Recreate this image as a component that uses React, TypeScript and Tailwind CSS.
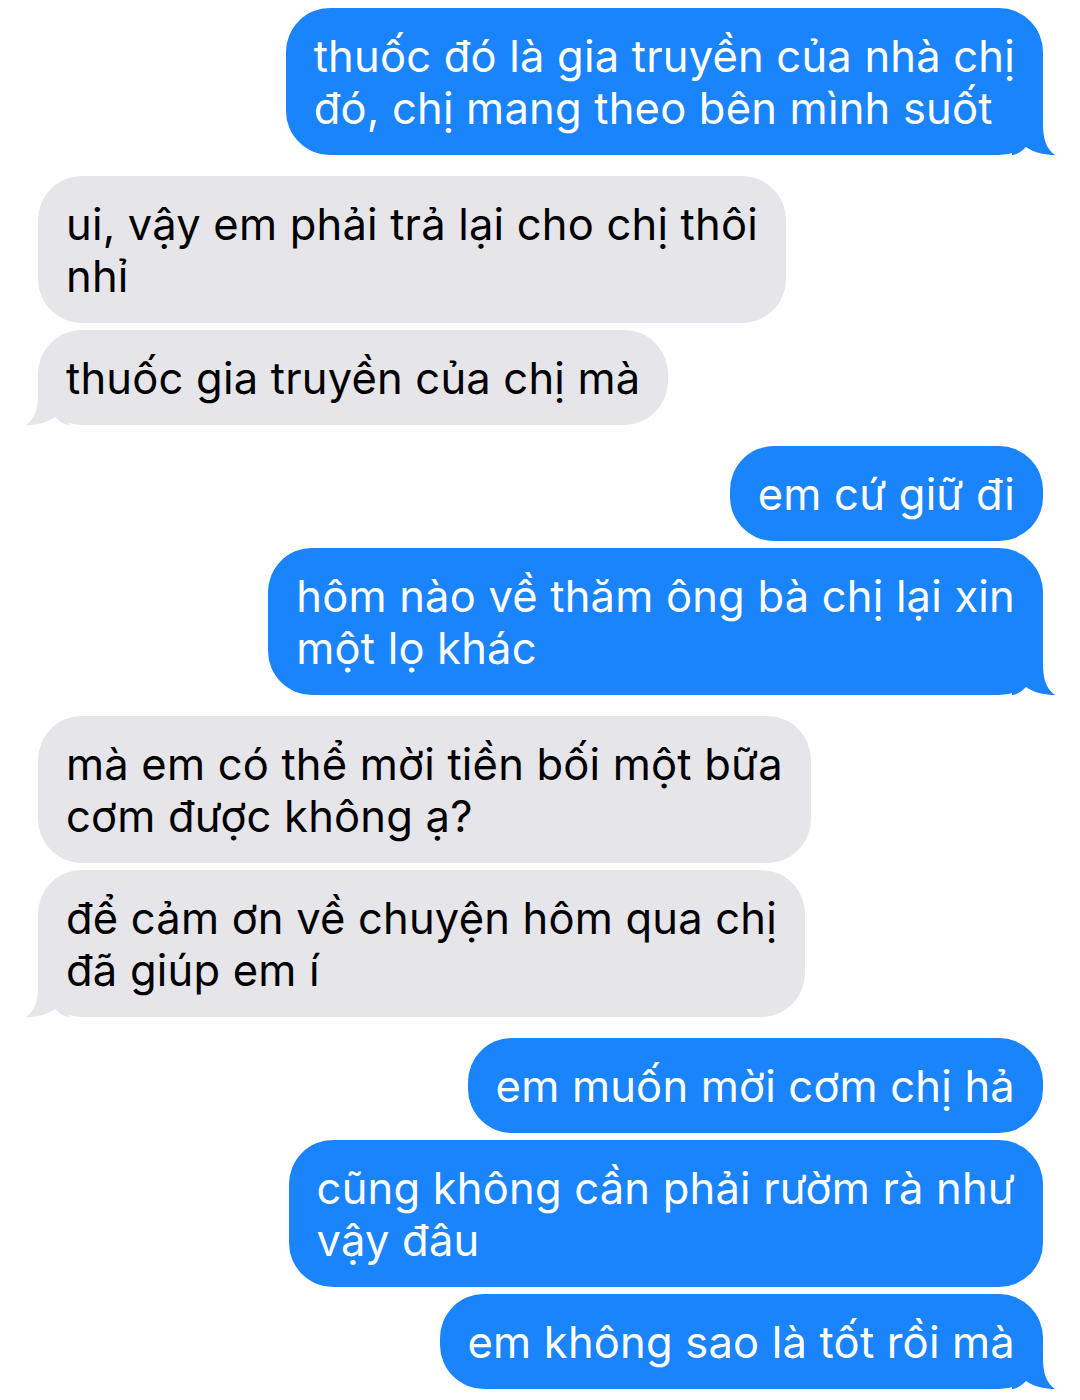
const BLUE = '#1a84fd';

type Msg = { lines: string[]; tail?: boolean };
type Group = { sent: boolean; msgs: Msg[] };

const groups: Group[] = [
  { sent: true, msgs: [{ lines: ['thuốc đó là gia truyền của nhà chị', 'đó, chị mang theo bên mình suốt'], tail: true }] },
  {
    sent: false,
    msgs: [
      { lines: ['ui, vậy em phải trả lại cho chị thôi', 'nhỉ'] },
      { lines: ['thuốc gia truyền của chị mà'], tail: true },
    ],
  },
  {
    sent: true,
    msgs: [
      { lines: ['em cứ giữ đi'] },
      { lines: ['hôm nào về thăm ông bà chị lại xin', 'một lọ khác'], tail: true },
    ],
  },
  {
    sent: false,
    msgs: [
      { lines: ['mà em có thể mời tiền bối một bữa', 'cơm được không ạ?'] },
      { lines: ['để cảm ơn về chuyện hôm qua chị', 'đã giúp em í'], tail: true },
    ],
  },
  {
    sent: true,
    msgs: [
      { lines: ['em muốn mời cơm chị hả'] },
      { lines: ['cũng không cần phải rườm rà như', 'vậy đâu'] },
      { lines: ['em không sao là tốt rồi mà'], tail: true },
    ],
  },
];

function Tail({ sent }: { sent: boolean }) {
  if (sent) {
    return (
      <svg className="absolute right-[-12px] bottom-0 w-[43px] h-[46px]" viewBox="0 0 43 46">
        <path d="M0 0 L31 0 L31 15 C31 29 34 40 43 46 C34 46 22 44 14 38 C9 43 4 46 0 46 Z" fill={BLUE} />
      </svg>
    );
  }
  return (
    <svg className="absolute left-[-12px] bottom-0 w-[43px] h-[46px]" viewBox="0 0 43 46">
      <path d="M43 0 L12 0 L12 15 C12 29 9 40 0 46 C9 46 21 44 29 38 C34 43 39 46 43 46 Z" fill="#e5e5ea" />
    </svg>
  );
}

function Bubble({ msg, sent }: { msg: Msg; sent: boolean }) {
  return (
    <div
      className={`relative rounded-[44px] px-[28px] py-[21.5px] text-[43.5px] leading-[52px] tracking-[0.2px] whitespace-nowrap ${
        sent ? 'self-end bg-[#1a84fd] text-white' : 'self-start bg-[#e5e5ea] text-black'
      }`}
    >
      {msg.tail && <Tail sent={sent} />}
      <div className="relative">
        {msg.lines.map((l, i) => (
          <div key={i}>{l}</div>
        ))}
      </div>
    </div>
  );
}

export default function App() {
  return (
    <div
      className="w-[1080px] h-[1400px] bg-white pt-[8px] pl-[38px] pr-[37px] flex flex-col gap-[21px] overflow-hidden"
      style={{ fontFamily: 'Inter, "Noto Sans", sans-serif' }}
    >
      {groups.map((g, gi) => (
        <div key={gi} className="flex flex-col gap-[7px]">
          {g.msgs.map((m, mi) => (
            <Bubble key={mi} msg={m} sent={g.sent} />
          ))}
        </div>
      ))}
    </div>
  );
}
